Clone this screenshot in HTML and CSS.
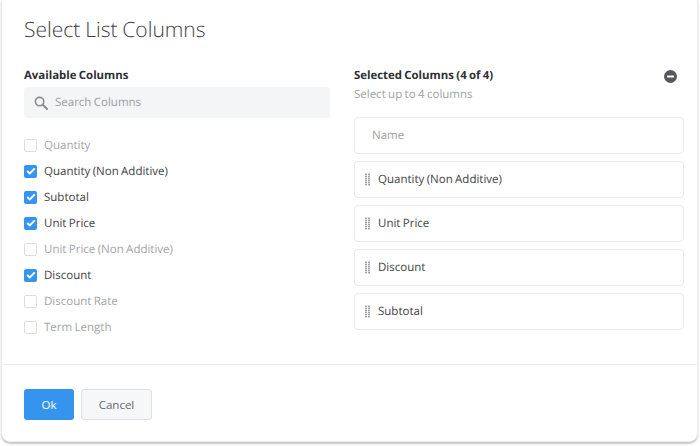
FILE: index.html
```html
<!DOCTYPE html>
<html lang="en">
<head>
<meta charset="utf-8">
<title>Select List Columns</title>
<link rel="stylesheet" href="styles.css">
</head>
<body>
<div class="dialog">
  <h1 class="title">Select List Columns</h1>
  <div class="columns">
    <section class="left">
      <h2 class="heading">Available Columns</h2>
      <div class="search">
        <svg class="search-icon" width="14" height="14" viewBox="0 0 14 14"><circle cx="5.6" cy="5.6" r="4.2" fill="none" stroke="#8a8d91" stroke-width="1.6"/><path d="M8.8 8.8L13 13" stroke="#8a8d91" stroke-width="2" stroke-linecap="round"/></svg>
        <span>Search Columns</span>
      </div>
      <ul class="checks">
        <li class="check off"><span class="box"></span>Quantity</li>
        <li class="check on"><span class="box"><svg width="10" height="8" viewBox="0 0 10 8"><path d="M1.2 4L3.8 6.4L8.8 1.4" fill="none" stroke="#fff" stroke-width="2"/></svg></span>Quantity (Non Additive)</li>
        <li class="check on"><span class="box"><svg width="10" height="8" viewBox="0 0 10 8"><path d="M1.2 4L3.8 6.4L8.8 1.4" fill="none" stroke="#fff" stroke-width="2"/></svg></span>Subtotal</li>
        <li class="check on"><span class="box"><svg width="10" height="8" viewBox="0 0 10 8"><path d="M1.2 4L3.8 6.4L8.8 1.4" fill="none" stroke="#fff" stroke-width="2"/></svg></span>Unit Price</li>
        <li class="check off"><span class="box"></span>Unit Price (Non Additive)</li>
        <li class="check on"><span class="box"><svg width="10" height="8" viewBox="0 0 10 8"><path d="M1.2 4L3.8 6.4L8.8 1.4" fill="none" stroke="#fff" stroke-width="2"/></svg></span>Discount</li>
        <li class="check off"><span class="box"></span>Discount Rate</li>
        <li class="check off"><span class="box"></span>Term Length</li>
      </ul>
    </section>
    <section class="right">
      <div class="right-head">
        <h2 class="heading">Selected Columns (4 of 4)</h2>
        <svg class="minus" width="13" height="13" viewBox="0 0 13 13"><circle cx="6.5" cy="6.5" r="6.5" fill="#55585c"/><rect x="3" y="5.4" width="7" height="2.2" rx="0.6" fill="#fff"/></svg>
      </div>
      <p class="hint">Select up to 4 columns</p>
      <div class="row fixed">Name</div>
      <div class="row"><span class="grip"></span>Quantity (Non Additive)</div>
      <div class="row"><span class="grip"></span>Unit Price</div>
      <div class="row"><span class="grip"></span>Discount</div>
      <div class="row"><span class="grip"></span>Subtotal</div>
    </section>
  </div>
  <footer class="footer">
    <button class="btn primary">Ok</button>
    <button class="btn secondary">Cancel</button>
  </footer>
</div>
</body>
</html>
```
FILE: styles.css
```css
* { box-sizing: border-box; }
html, body { margin: 0; padding: 0; background: #fff; }
body {
  width: 700px;
  height: 446px;
  overflow: hidden;
  font-family: "Open Sans", "Noto Sans", sans-serif;
  color: #3f4245;
  text-rendering: geometricPrecision;
  word-spacing: -0.6px;
}
.dialog {
  width: 697px;
  height: 442px;
  margin-left: 1px;
  background: #fff;
  border-radius: 0 0 9px 9px;
  border: 1px solid #ededed;
  border-top: 0;
  box-shadow: 0 2px 2px rgba(0, 0, 0, 0.22);
  display: flex;
  flex-direction: column;
  padding-top: 15px;
}
.title {
  margin: 0 0 0 22px;
  font-size: 21px;
  line-height: 30px;
  font-weight: 300;
  color: #3d4043;
}
.columns {
  display: flex;
  gap: 24px;
  padding: 21px 13px 0 22px;
  flex: 1;
}
.left { width: 306px; }
.right { width: 330px; }
.heading {
  margin: 0;
  font-size: 11.4px;
  line-height: 20px;
  font-weight: 700;
  color: #2c2f33;
}
.search {
  height: 31px;
  margin-top: 1px;
  background: #f4f5f7;
  border-radius: 4px;
  display: flex;
  align-items: center;
  padding-left: 10px;
  gap: 7px;
  font-size: 11.5px;
  color: #9b9ea1;
}
.checks {
  list-style: none;
  margin: 14px 0 0;
  padding: 0;
}
.check {
  height: 26px;
  display: flex;
  align-items: center;
  font-size: 11.5px;
}
.box {
  width: 13px;
  height: 13px;
  margin: 0 7px 0 0;
  border-radius: 2px;
  display: flex;
  align-items: center;
  justify-content: center;
}
.off { color: #a3a5a8; }
.off .box { border: 1px solid #dcdddf; background: #fff; }
.on .box { background: #3595ee; }
.right-head {
  display: flex;
  justify-content: space-between;
  align-items: center;
  padding-right: 7px;
}
.hint {
  margin: 0 0 13px;
  font-size: 11.5px;
  line-height: 18px;
  color: #a0a2a5;
}
.row {
  height: 37px;
  margin-bottom: 7px;
  border: 1px solid #e9eaec;
  border-radius: 4px;
  display: flex;
  align-items: center;
  padding-left: 10px;
  font-size: 11.5px;
}
.fixed { padding-left: 17px; color: #9b9ea1; }
.grip {
  width: 5px;
  height: 13px;
  margin-right: 8px;
  background:
    repeating-linear-gradient(0deg, rgba(255, 255, 255, 0.6) 0 1px, transparent 1px 2px),
    repeating-linear-gradient(90deg, #a0a2a5 0 2px, #fff 2px 3px);
}
.footer {
  height: 77px;
  border-top: 1px solid #f0f0f1;
  padding: 24px 22px 0;
  display: flex;
  gap: 7px;
  align-items: flex-start;
}
.btn {
  height: 31px;
  border-radius: 3px;
  font-family: inherit;
  font-size: 11.5px;
  padding: 0;
}
.primary { width: 50px; background: #3595ee; border: 0; color: #fff; }
.secondary { width: 71px; background: #f6f7f9; border: 1px solid #dedfe2; color: #63666a; }
```
